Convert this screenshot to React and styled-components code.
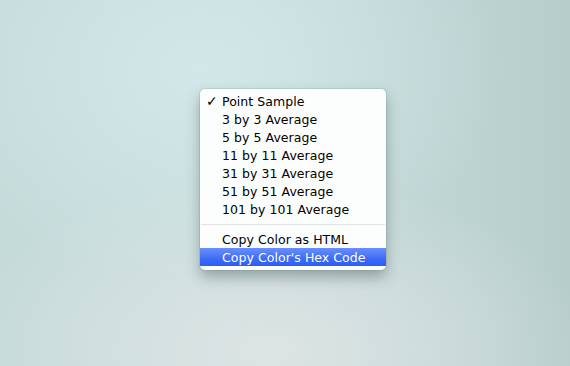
import React from "react";
import styled, { createGlobalStyle } from "styled-components";

const Global = createGlobalStyle`
  html, body { margin: 0; padding: 0; }
  body { width: 570px; height: 366px; overflow: hidden; }
  #root { height: 100%; }
`;

const Desktop = styled.div`
  width: 570px;
  height: 366px;
  box-sizing: border-box;
  padding: 89px 0 0 200px;
  background:
    radial-gradient(ellipse 320px 170px at 270px 350px, rgba(222,228,228,0.95), rgba(222,228,228,0) 100%),
    radial-gradient(ellipse 300px 220px at 200px 70px, rgba(210,231,231,1), rgba(210,231,231,0) 100%),
    linear-gradient(90deg, #c4dad9 0%, #c8dedd 40%, #bed4d3 80%, #b7cdcc 100%);
  font-family: "DejaVu Sans", "Liberation Sans", sans-serif;
`;

const Menu = styled.div`
  width: 186px;
  box-sizing: border-box;
  padding: 3px 0 4px;
  background: rgba(253, 254, 254, 0.98);
  border-radius: 5px;
  box-shadow: 0 7px 14px rgba(50, 70, 70, 0.4), 0 0 0 1px rgba(140, 160, 160, 0.25);
  display: flex;
  flex-direction: column;
`;

const Item = styled.div`
  height: 18px;
  display: flex;
  align-items: center;
  padding-left: 22px;
  position: relative;
  font-size: 12.5px;
  letter-spacing: 0.05px;
  color: ${(p) => (p.$active ? "#ffffff" : "#000")};
  background: ${(p) =>
    p.$active ? "linear-gradient(#6a8ffb, #3d6cf6 60%, #2d5ef2)" : "transparent"};
`;

const Check = styled.span`
  position: absolute;
  left: 6px;
  top: 0;
  line-height: 18px;
  font-size: 14px;
  font-weight: bold;
`;

const Separator = styled.div`
  height: 12px;
  display: flex;
  align-items: center;
  &::after {
    content: "";
    flex: 1;
    height: 1px;
    margin: 1px 1px 0;
    background: #e2e4e4;
  }
`;

const samples = [
  "Point Sample",
  "3 by 3 Average",
  "5 by 5 Average",
  "11 by 11 Average",
  "31 by 31 Average",
  "51 by 51 Average",
  "101 by 101 Average",
];

export default function App() {
  return (
    <>
      <Global />
      <Desktop>
        <Menu>
          {samples.map((s, i) => (
            <Item key={s}>
              {i === 0 && <Check>✓</Check>}
              {s}
            </Item>
          ))}
          <Separator />
          <Item>Copy Color as HTML</Item>
          <Item $active>Copy Color's Hex Code</Item>
        </Menu>
      </Desktop>
    </>
  );
}
